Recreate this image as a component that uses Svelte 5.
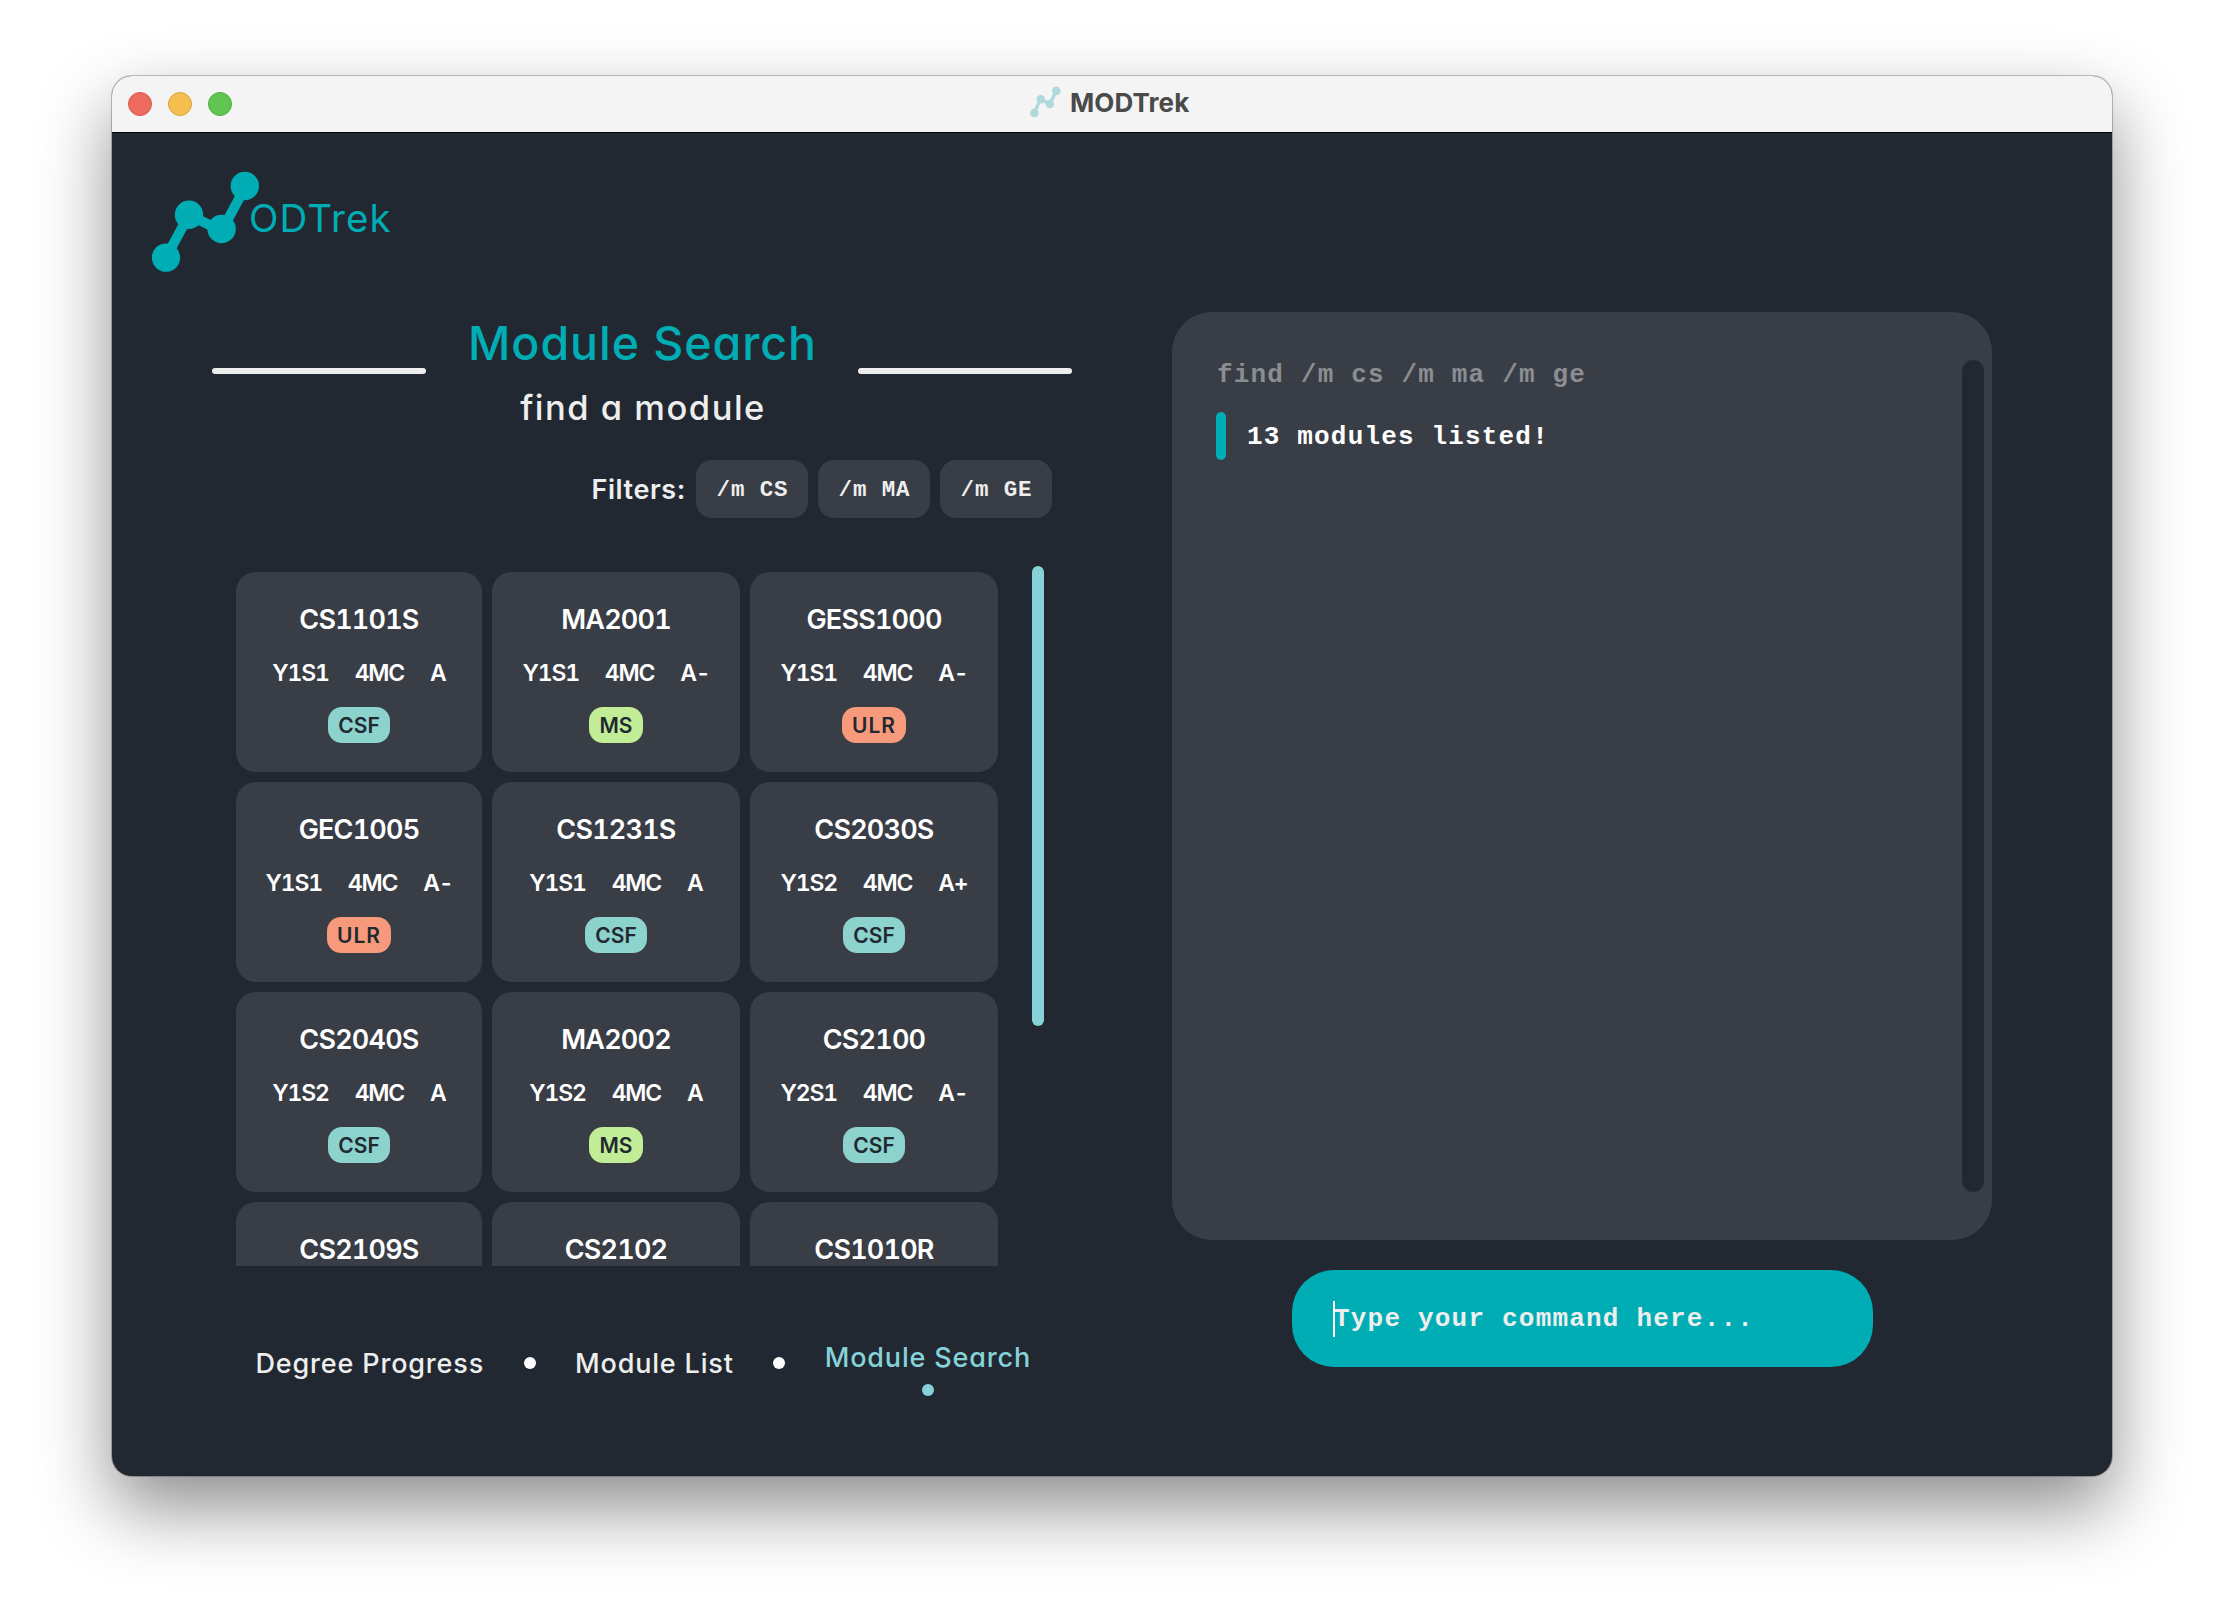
<script>
  const modules = [
    { code: 'CS1101S', sem: 'Y1S1', grade: 'A', tag: 'CSF' },
    { code: 'MA2001', sem: 'Y1S1', grade: 'A-', tag: 'MS' },
    { code: 'GESS1000', sem: 'Y1S1', grade: 'A-', tag: 'ULR' },
    { code: 'GEC1005', sem: 'Y1S1', grade: 'A-', tag: 'ULR' },
    { code: 'CS1231S', sem: 'Y1S1', grade: 'A', tag: 'CSF' },
    { code: 'CS2030S', sem: 'Y1S2', grade: 'A+', tag: 'CSF' },
    { code: 'CS2040S', sem: 'Y1S2', grade: 'A', tag: 'CSF' },
    { code: 'MA2002', sem: 'Y1S2', grade: 'A', tag: 'MS' },
    { code: 'CS2100', sem: 'Y2S1', grade: 'A-', tag: 'CSF' },
    { code: 'CS2109S' },
    { code: 'CS2102' },
    { code: 'CS1010R' }
  ];
  const filters = ['/m CS', '/m MA', '/m GE'];
</script>

<div class="desk">
<div class="window">
  <header class="titlebar">
    <div class="lights"><i class="close"></i><i class="min"></i><i class="max"></i></div>
    <svg class="mini" width="32" height="32" viewBox="0 0 32 32">
      <polyline points="4,27 10.5,13.4 20,18 26.2,5" fill="none" stroke="#b0d9dc" stroke-width="3.2" />
      <g fill="#b0d9dc">
        <circle cx="4.4" cy="27" r="4.3" /><circle cx="10.8" cy="13.2" r="4.3" />
        <circle cx="19.8" cy="18" r="4.3" /><circle cx="26.3" cy="4.9" r="4.3" />
      </g>
    </svg>
    <span class="apptitle">MODTrek</span>
  </header>

  <main>
    <div class="brand">
      <svg width="108" height="102" viewBox="0 0 108 102">
        <polyline points="14,86.6 37,43.8 69.6,60 92.8,17" fill="none" stroke="#00adb5" stroke-width="10" />
        <g fill="#00adb5">
          <circle cx="14" cy="86.6" r="14.2" /><circle cx="37" cy="43.8" r="14.2" />
          <circle cx="69.6" cy="58" r="14.2" /><circle cx="92.8" cy="15" r="14.2" />
        </g>
      </svg>
      <span>ODTrek</span>
    </div>

    <div class="columns">
      <section class="left">
        <div class="heading">
          <div class="rule"></div>
          <div class="words"><h1>Module Search</h1><p>find a module</p></div>
          <div class="rule"></div>
        </div>

        <div class="filters">
          <span class="label">Filters:</span>
          {#each filters as f}<span class="chip">{f}</span>{/each}
        </div>

        <div class="results">
          <div class="grid">
            {#each modules as m}
              <article class="card">
                <h2>{m.code}</h2>
                {#if m.tag}
                  <div class="info"><span>{m.sem}</span><span>4MC</span><span>{m.grade}</span></div>
                  <span class="tag {m.tag.toLowerCase()}">{m.tag}</span>
                {/if}
              </article>
            {/each}
          </div>
          <div class="thumb"></div>
        </div>

        <nav>
          <span class="link">Degree Progress</span>
          <i></i>
          <span class="link">Module List</span>
          <i></i>
          <span class="active"><b>Module Search</b><i></i></span>
        </nav>
      </section>

      <section class="right">
        <div class="console">
          <div class="log">
            <div class="cmd">find /m cs /m ma /m ge</div>
            <div class="reply"><i></i><span>13 modules listed!</span></div>
          </div>
          <div class="track"></div>
        </div>
        <div class="prompt"><i class="caret"></i><span>Type your command here...</span></div>
      </section>
    </div>
  </main>
</div>
</div>

<style>
  :global(body) {
    background: #fff;
  }
  * {
    box-sizing: border-box;
    margin: 0;
  }
  i {
    display: block;
    flex: none;
  }
  .desk {
    width: 2224px;
    height: 1624px;
    padding: 76px 112px 0;
    overflow: hidden;
    background: #fff;
  }
  .window {
    width: 2000px;
    height: 1400px;
    border-radius: 20px;
    overflow: hidden;
    background: #222831;
    color: #eee;
    font-family: Inter, sans-serif;
    font-feature-settings: 'cv11';
    font-weight: 500;
    white-space: nowrap;
    box-shadow: 0 0 0 1px rgba(0, 0, 0, 0.24), 0 32px 72px rgba(0, 0, 0, 0.45);
  }
  .titlebar {
    display: grid;
    grid-template-columns: 918px 32px auto;
    align-items: center;
    height: 57px;
    background: #f4f4f4;
    border-bottom: 1px solid #000;
  }
  .lights {
    display: flex;
    gap: 16px;
    padding-left: 16px;
  }
  .lights i {
    width: 24px;
    height: 24px;
    border-radius: 50%;
    border: 1px solid #d8554a;
    background: #ed6a5e;
  }
  .lights .min {
    background: #f5bf4f;
    border-color: #d9a23c;
  }
  .lights .max {
    background: #61c554;
    border-color: #50aa40;
  }
  .mini {
    margin-top: -5px;
  }
  .apptitle {
    padding-left: 8px;
    margin-top: -3px;
    font-size: 26px;
    font-weight: 700;
    letter-spacing: 0.1px;
    color: #4a4a4a;
  }
  .brand {
    display: flex;
    height: 102px;
    margin: 38px 0 0 40px;
  }
  .brand span {
    margin: 23px 0 0 -11px;
    font-size: 38.5px;
    line-height: 48px;
    font-weight: 400;
    letter-spacing: 1.1px;
    color: #00adb5;
  }
  .columns {
    display: grid;
    grid-template-columns: 860px 820px;
    column-gap: 100px;
    margin: 39px 0 0 100px;
  }
  .heading {
    display: grid;
    grid-template-columns: 214px 1fr 214px;
    align-items: start;
  }
  .rule {
    height: 6px;
    margin-top: 56px;
    border-radius: 3px;
    background: #eee;
  }
  .words {
    text-align: center;
  }
  h1 {
    height: 60px;
    padding: 1px 0 0 1px;
    font-size: 46.5px;
    line-height: 60px;
    font-weight: 500;
    letter-spacing: 0.95px;
    color: #00adb5;
  }
  p {
    margin-top: 12px;
    padding-left: 2px;
    font-size: 34.5px;
    line-height: 48px;
    height: 48px;
    letter-spacing: 1.5px;
  }
  .filters {
    display: flex;
    justify-content: flex-end;
    gap: 10px;
    height: 58px;
    margin: 28px 20px 0 0;
  }
  .label {
    line-height: 60px;
    font-size: 27px;
    font-weight: 600;
    letter-spacing: 0.6px;
  }
  .chip {
    width: 112px;
    padding-left: 1px;
    border-radius: 16px;
    background: #393d46;
    text-align: center;
    font: 700 22.5px/60px 'Liberation Mono', monospace;
    letter-spacing: 0.9px;
  }
  .results {
    display: flex;
    justify-content: space-between;
    height: 700px;
    margin: 48px 28px 0 24px;
    overflow: hidden;
  }
  .grid {
    display: grid;
    grid-template-columns: 246px 248px 248px;
    grid-auto-rows: 200px;
    gap: 10px;
    padding-top: 6px;
  }
  .thumb {
    width: 12px;
    height: 460px;
    border-radius: 6px;
    background: #85d3d8;
  }
  .card {
    display: flex;
    flex-direction: column;
    align-items: center;
    padding-top: 32px;
    border-radius: 20px;
    background: #393d46;
    color: #fff;
    font-feature-settings: 'cv11', 'tnum';
    font-weight: 600;
  }
  h2 {
    font-size: 27px;
    line-height: 32px;
    font-weight: inherit;
    letter-spacing: -0.8px;
  }
  .info {
    display: flex;
    gap: 26px;
    margin-top: 23px;
    font-size: 23px;
    line-height: 28px;
    letter-spacing: -1.2px;
  }
  .tag {
    margin-top: 20px;
    height: 36px;
    padding: 0 10px;
    border-radius: 14px;
    font-size: 21px;
    line-height: 37px;
    color: #222831;
  }
  .csf {
    background: #8dd3cd;
  }
  .ms {
    background: #c1ed96;
  }
  .ulr {
    background: #f69a7b;
    letter-spacing: 1px;
  }
  nav {
    display: flex;
    align-items: center;
    gap: 39.5px;
    margin: 67px 0 0 43.5px;
    height: 60px;
    font-size: 27px;
    font-weight: 500;
    line-height: 36px;
    letter-spacing: 0.83px;
  }
  nav i {
    width: 12px;
    height: 12px;
    border-radius: 50%;
    background: #fff;
  }
  nav b {
    font-weight: inherit;
  }
  .link {
    padding-top: 1px;
  }
  .active {
    display: flex;
    flex-direction: column;
    align-items: center;
    gap: 8px;
    padding-top: 10px;
    color: #85d3d8;
  }
  .active i {
    background: #85d3d8;
  }
  .console {
    display: flex;
    justify-content: space-between;
    height: 928px;
    padding: 48px 8px 48px 44px;
    border-radius: 40px;
    background: #393d46;
    font: 700 26px/32px 'Liberation Mono', monospace;
    letter-spacing: 1.17px;
  }
  .cmd {
    margin-top: -1px;
    padding-left: 1px;
    color: #8a8d92;
  }
  .reply {
    display: flex;
    gap: 20px;
    margin-top: 21px;
    color: #fff;
    line-height: 51px;
  }
  .reply i {
    width: 10px;
    height: 48px;
    border-radius: 5px;
    background: #00adb5;
  }
  .reply span {
    padding-left: 1px;
  }
  .track {
    width: 22px;
    height: 832px;
    border-radius: 11px;
    background: #222831;
  }
  .prompt {
    display: flex;
    align-items: center;
    width: 581px;
    height: 97px;
    margin: 30px 0 0 120px;
    padding-left: 41px;
    border-radius: 42px;
    background: #00adb5;
    font: 700 26px/32px 'Liberation Mono', monospace;
    letter-spacing: 1.2px;
  }
  .caret {
    width: 2px;
    height: 36px;
    margin-right: -1px;
    background: #fff;
  }
</style>
